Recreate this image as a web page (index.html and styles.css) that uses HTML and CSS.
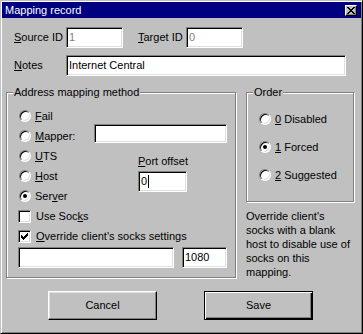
FILE: index.html
```html
<!DOCTYPE html>
<html lang="en">
<head>
<meta charset="UTF-8">
<title>Mapping record</title>
<link rel="stylesheet" href="styles.css">
</head>
<body>
<div class="window">
<div class="titlebar">
<span class="title">Mapping record</span>
<span class="close">
<svg width="8" height="7" viewBox="0 0 8 7"><path d="M0 0h2v1h-2zM6 0h2v1h-2zM1 1h2v1h-2zM5 1h2v1h-2zM2 2h4v1h-4zM3 3h2v1h-2zM2 4h4v1h-4zM1 5h2v1h-2zM5 5h2v1h-2zM0 6h2v1h-2zM6 6h2v1h-2z" fill="#000"/></svg>
</span>
</div>

<div class="content">
<div class="field-row">
<span class="lbl"><u>S</u>ource ID</span>
<div class="edit id disabled">1</div>
<span class="lbl lbl-target"><u>T</u>arget ID</span>
<div class="edit id disabled">0</div>
</div>
<div class="field-row notes-row">
<span class="lbl"><u>N</u>otes</span>
<div class="edit notes">Internet Central</div>
</div>

<div class="middle">
<div class="group method">
<span class="legend">Address mapping method</span>
<div class="method-grid">
<div class="opt"><span class="radio"></span><span><u>F</u>ail</span></div>
<div class="opt"><span class="radio"></span><span><u>M</u>apper:</span></div>
<div class="edit mapper"></div>
<div class="opt"><span class="radio"></span><span><u>U</u>TS</span></div>
<div class="port">
<div><u>P</u>ort offset</div>
<div class="edit port-edit">0<span class="caret"></span></div>
</div>
<div class="opt"><span class="radio"></span><span><u>H</u>ost</span></div>
<div class="opt"><span class="radio on"></span><span>Ser<u>v</u>er</span></div>
</div>
<div class="check"><span class="box"></span><span>Use Soc<u>k</u>s</span></div>
<div class="check"><span class="box"><svg width="7" height="7" viewBox="0 0 7 7"><path d="M6 0h1v3h-1zM5 1h1v3h-1zM4 2h1v3h-1zM3 3h1v3h-1zM2 4h1v3h-1zM1 3h1v3h-1zM0 2h1v3h-1z" fill="#000"/></svg></span><span><u>O</u>verride client's socks settings</span></div>
<div class="socks">
<div class="edit host"></div>
<div class="edit socks-port">1080</div>
</div>
</div>

<div class="side">
<div class="group order">
<span class="legend">Order</span>
<div class="order-opt"><span class="radio"></span><span><u>0</u> Disabled</span></div>
<div class="order-opt"><span class="radio on"></span><span><u>1</u> Forced</span></div>
<div class="order-opt"><span class="radio"></span><span><u>2</u> Suggested</span></div>
</div>
<p class="help">Override client's<br>socks with a blank<br>host to disable use of<br>socks on this<br>mapping.</p>
</div>
</div>

<div class="buttons">
<div class="btn">Cancel</div>
<div class="btn btn-default">Save</div>
</div>
</div>
</div>
</body>
</html>
```

FILE: styles.css
```css
body {
margin: 0;
font-family: "Liberation Sans", Arial, sans-serif;
font-size: 11px;
color: #000;
background-color: #c0c0c0;
}

.window {
width: 363px;
height: 334px;
box-sizing: border-box;
background-color: #c0c0c0;
border: 1px solid;
border-color: #c0c0c0 #000 #000 #c0c0c0;
padding: 1px;
box-shadow: inset 1px 1px #fff, inset -1px -1px #808080;
line-height: 13px;
}

/* barra de titulo */
.titlebar {
height: 16px;
background-color: #000080;
color: #fff;
display: flex;
align-items: center;
justify-content: space-between;
padding-left: 3px;
}

.close {
width: 12px;
height: 11px;
box-sizing: border-box;
margin-right: 4px;
background-color: #c0c0c0;
border: 1px solid;
border-color: #fff #000 #000 #fff;
box-shadow: inset -1px -1px #808080;
display: flex;
align-items: center;
justify-content: center;
}

.content {
padding: 9px 0 0 4px;
}

.field-row {
display: flex;
align-items: center;
padding-left: 8px;
}

.notes-row {
margin-top: 7px;
}

.lbl {
width: 52px;
}

.lbl-target {
margin-left: 15px;
width: 48px;
}

/* campos de texto hundidos */
.edit {
box-sizing: border-box;
height: 21px;
background-color: #fff;
border: 1px solid;
border-color: #808080 #fff #fff #808080;
box-shadow: inset 1px 1px #000, inset -1px -1px #dfdfdf;
padding: 0 2px;
display: flex;
align-items: center;
white-space: nowrap;
}

.id {
width: 57px;
}

.disabled {
color: #808080;
}

.notes {
width: 280px;
}

.middle {
display: flex;
align-items: flex-start;
gap: 10px;
height: 186px;
margin-top: 16px;
}

.group {
position: relative;
box-sizing: border-box;
border: 1px solid #808080;
box-shadow: 1px 1px 0 #fff, inset 1px 1px 0 #fff;
}

.legend {
position: absolute;
top: -7px;
left: 6px;
padding: 0 1px;
background-color: #c0c0c0;
}

.method {
width: 230px;
height: 186px;
padding: 13px 0 0 12px;
}

.method-grid {
display: grid;
grid-template-columns: 75px 133px;
grid-template-rows: repeat(5, 20px);
}

.opt {
grid-column: 1;
display: flex;
align-items: center;
}

.radio {
position: relative;
width: 12px;
height: 12px;
box-sizing: border-box;
border-radius: 50%;
border: 1px solid;
border-color: #808080 #fff #fff #808080;
background-color: #fff;
box-shadow: inset 1px 1px #000, inset -1px -1px #dfdfdf;
margin-right: 4px;
flex-shrink: 0;
}

.radio.on::after {
content: "";
position: absolute;
left: 3px;
top: 3px;
width: 4px;
height: 4px;
border-radius: 50%;
background-color: #000;
}

.mapper {
grid-column: 2;
grid-row: 2;
align-self: start;
width: 133px;
height: 19px;
margin-top: -2px;
}

.port {
grid-column: 2;
grid-row: 3 / span 3;
padding: 9px 0 0 44px;
}

.port-edit {
width: 49px;
margin-top: 3px;
}

.caret {
display: inline-block;
width: 1px;
height: 13px;
margin-left: 1px;
background-color: #000;
}

.check {
display: flex;
align-items: center;
height: 20px;
margin-left: -1px;
}

.box {
width: 13px;
height: 13px;
box-sizing: border-box;
border: 1px solid;
border-color: #808080 #fff #fff #808080;
box-shadow: inset 1px 1px #000, inset -1px -1px #dfdfdf;
background-color: #fff;
margin-right: 5px;
display: flex;
align-items: center;
justify-content: center;
}

.socks {
display: flex;
gap: 8px;
margin: 1px 0 0 -1px;
}

.host {
width: 156px;
}

.socks-port {
width: 45px;
}

.side {
width: 108px;
}

.order {
height: 110px;
padding: 12px 0 0 12px;
}

.order-opt {
display: flex;
align-items: center;
height: 28px;
}

.help {
margin: 7px 0 0;
line-height: 14px;
}

/* botones */
.buttons {
display: flex;
gap: 47px;
margin-top: 13px;
padding-left: 42px;
}

.btn {
width: 109px;
height: 29px;
box-sizing: border-box;
display: flex;
align-items: center;
justify-content: center;
border: 1px solid;
border-color: #fff #000 #000 #fff;
box-shadow: inset -1px -1px #808080, inset 1px 1px #dfdfdf;
}

.btn-default {
border-color: #000;
box-shadow: inset 1px 1px #fff, inset -1px -1px #000, inset -2px -2px #808080;
}
```
